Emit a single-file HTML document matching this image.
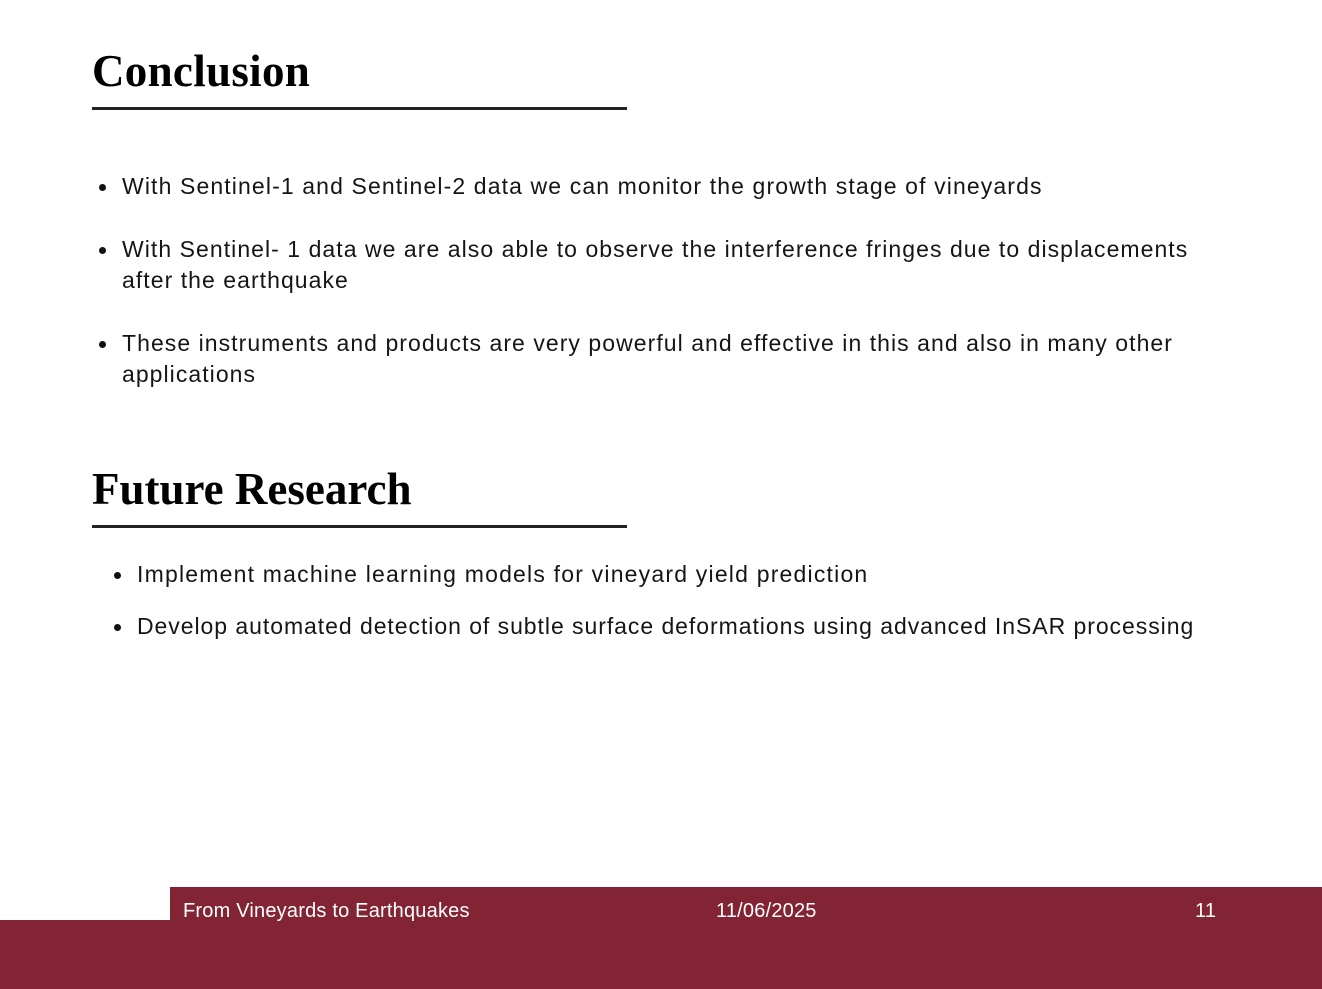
<!DOCTYPE html>
<html><head><meta charset="utf-8"><style>
body{margin:0;width:1322px;height:989px;position:relative;background:#fff;overflow:hidden;font-family:"Liberation Sans",sans-serif;color:#111}
.h{position:absolute;left:92px;font-family:"Liberation Serif",serif;font-weight:bold;font-size:45px;letter-spacing:0px;line-height:50px;color:#000}
.rule{position:absolute;left:92px;width:535px;height:3px;background:#222}
.t{position:absolute;font-size:23px;line-height:31px;white-space:nowrap;letter-spacing:1.05px;color:#151515}
.b{position:absolute;width:7px;height:7px;border-radius:50%;background:#111}
.f{position:absolute;color:#fff;font-size:20px;line-height:22px;letter-spacing:0.2px}
</style></head><body>
<div class="h" style="top:46px;letter-spacing:0.3px">Conclusion</div>
<div class="rule" style="top:107px"></div>
<div class="b" style="left:99px;top:184px"></div>
<div class="t" style="left:122px;top:171px;letter-spacing:1.12px">With Sentinel-1 and Sentinel-2 data we can monitor the growth stage of vineyards</div>
<div class="b" style="left:99px;top:247px"></div>
<div class="t" style="left:122px;top:234px">With Sentinel- 1 data we are also able to observe the interference fringes due to displacements</div>
<div class="t" style="left:122px;top:265px">after the earthquake</div>
<div class="b" style="left:99px;top:341px"></div>
<div class="t" style="left:122px;top:328px">These instruments and products are very powerful and effective in this and also in many other</div>
<div class="t" style="left:122px;top:359px">applications</div>
<div class="h" style="top:464px">Future Research</div>
<div class="rule" style="top:525px"></div>
<div class="b" style="left:114px;top:572px"></div>
<div class="t" style="left:137px;top:559px;letter-spacing:1.2px">Implement machine learning models for vineyard yield prediction</div>
<div class="b" style="left:114px;top:624px"></div>
<div class="t" style="left:137px;top:611px;letter-spacing:0.95px">Develop automated detection of subtle surface deformations using advanced InSAR processing</div>
<div style="position:absolute;left:170px;top:887px;width:1152px;height:102px;background:#832434"></div>
<div style="position:absolute;left:0;top:920px;width:1322px;height:69px;background:#832434"></div>
<div class="f" style="left:183px;top:900px">From Vineyards to Earthquakes</div>
<div class="f" style="left:716px;top:900px">11/06/2025</div>
<div class="f" style="left:1195px;top:900px">11</div>
</body></html>
